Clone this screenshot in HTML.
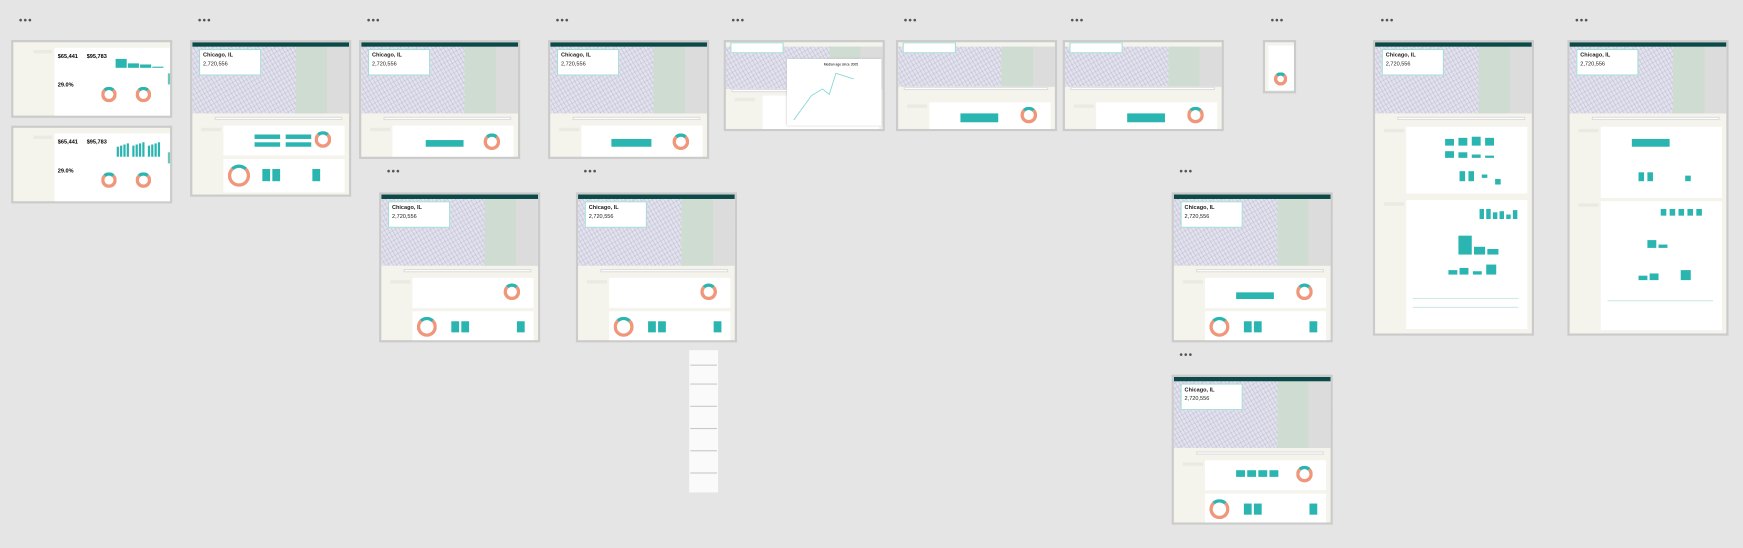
<!DOCTYPE html>
<html><head><meta charset="utf-8"><style>
*{margin:0;padding:0;box-sizing:border-box}
body{width:1743px;height:548px;background:#e5e5e5;overflow:hidden;font-family:"Liberation Sans",sans-serif}
#c{position:absolute;left:0;top:0;width:1568px;height:493px;transform:scale(1.11161);transform-origin:0 0}
.f{position:absolute;background:#f4f3ec;border:2px solid #cbcbcb;overflow:hidden}
.dots{position:absolute;font-size:9px;color:#555;letter-spacing:1px;line-height:6px}
.hd{position:absolute;left:0;top:0;right:0;height:3.5px;background:#0b4a48}
.mp{position:absolute;left:0;top:3.5px;right:0;background:
 linear-gradient(90deg,rgba(0,0,0,0) 66%,#cfdcd2 66%,#cfdcd2 86%,#dcdcdc 86%),
 repeating-linear-gradient(60deg,rgba(150,150,210,.25) 0 1px,transparent 1px 3px),
 repeating-linear-gradient(-30deg,rgba(150,150,210,.2) 0 1px,transparent 1px 4px),#e4e3ea}
.ic{position:absolute;left:4%;top:6px;width:40%;height:24px;background:#fff;border:1px solid #a9dcd8}
.ic b{position:absolute;left:3px;top:2px;font-size:5px;color:#222}
.ic i{position:absolute;left:3px;top:10px;font-size:5px;font-style:normal;color:#222}
.card{position:absolute;background:#fff}
.side{position:absolute;background:#ebeae2}
.bar{position:absolute;background:#2bb5b0}
.dn{position:absolute;border-radius:50%;border:3px solid #f0967a;border-top-color:#2bb5b0}
.ln{position:absolute;height:1px;background:#c9c9c9}
.srch{position:absolute;height:3px;background:#fff;border:0.5px solid #ddd}
.tab{position:absolute;width:3px;background:#6cc5b8}
</style></head><body><div id="c">

<div class="dots" style="left:17px;top:15px">•••</div>
<div class="dots" style="left:17px;top:93px">•••</div>
<div class="dots" style="left:178px;top:15px">•••</div>
<div class="dots" style="left:330px;top:15px">•••</div>
<div class="dots" style="left:500px;top:15px">•••</div>
<div class="dots" style="left:658px;top:15px">•••</div>
<div class="dots" style="left:813px;top:15px">•••</div>
<div class="dots" style="left:963px;top:15px">•••</div>
<div class="dots" style="left:1143px;top:15px">•••</div>
<div class="dots" style="left:1242px;top:15px">•••</div>
<div class="dots" style="left:1417px;top:15px">•••</div>
<div class="dots" style="left:348px;top:151px">•••</div>
<div class="dots" style="left:525px;top:151px">•••</div>
<div class="dots" style="left:1061px;top:151px">•••</div>
<div class="dots" style="left:1061px;top:316px">•••</div>

<div class="f" style="left:10px;top:36px;width:145px;height:70px">
 <div class="side" style="left:18px;top:7px;width:17px;height:3px"></div>
 <div class="card" style="left:37px;top:5px;width:104px;height:62px"></div>
 <div style="position:absolute;left:40px;top:10px;font-size:5px;font-weight:bold">$65,441</div>
 <div style="position:absolute;left:66px;top:10px;font-size:5px;font-weight:bold">$95,783</div>
 <div class="bar" style="left:92px;top:15px;width:10px;height:8px"></div>
 <div class="bar" style="left:103px;top:19px;width:10px;height:4px"></div>
 <div class="bar" style="left:114px;top:20px;width:10px;height:3px"></div>
 <div class="bar" style="left:125px;top:22px;width:10px;height:1px"></div>
 <div style="position:absolute;left:40px;top:36px;font-size:5px;font-weight:bold">29.0%</div>
 <div class="dn" style="left:79px;top:40px;width:14px;height:14px"></div>
 <div class="dn" style="left:110px;top:40px;width:14px;height:14px"></div>
 <div class="tab" style="left:139px;top:28px;height:10px"></div>
</div>
<div class="f" style="left:10px;top:113px;width:145px;height:70px">
 <div class="side" style="left:18px;top:7px;width:17px;height:3px"></div>
 <div class="card" style="left:37px;top:5px;width:104px;height:62px"></div>
 <div style="position:absolute;left:40px;top:10px;font-size:5px;font-weight:bold">$65,441</div>
 <div style="position:absolute;left:66px;top:10px;font-size:5px;font-weight:bold">$95,783</div>
 <div class="bar" style="left:93px;top:17px;width:2px;height:9px"></div><div class="bar" style="left:96px;top:16px;width:2px;height:10px"></div><div class="bar" style="left:99px;top:15px;width:2px;height:11px"></div><div class="bar" style="left:102px;top:14px;width:2px;height:12px"></div>
 <div class="bar" style="left:107px;top:16px;width:2px;height:10px"></div><div class="bar" style="left:110px;top:15px;width:2px;height:11px"></div><div class="bar" style="left:113px;top:14px;width:2px;height:12px"></div><div class="bar" style="left:116px;top:13px;width:2px;height:13px"></div>
 <div class="bar" style="left:121px;top:16px;width:2px;height:10px"></div><div class="bar" style="left:124px;top:15px;width:2px;height:11px"></div><div class="bar" style="left:127px;top:14px;width:2px;height:12px"></div><div class="bar" style="left:130px;top:13px;width:2px;height:13px"></div>
 <div style="position:absolute;left:40px;top:36px;font-size:5px;font-weight:bold">29.0%</div>
 <div class="dn" style="left:79px;top:40px;width:14px;height:14px"></div>
 <div class="dn" style="left:110px;top:40px;width:14px;height:14px"></div>
 <div class="tab" style="left:139px;top:22px;height:10px"></div>
</div>

<div class="f" style="left:171px;top:36px;width:145px;height:141px">
 <div class="mp" style="height:60px"></div><div class="hd"></div>
 <div class="ic"><b>Chicago, IL</b><i>2,720,556</i></div>
 <div class="srch" style="left:20px;top:67px;width:115px"></div>
 <div class="side" style="left:8px;top:77px;width:18px;height:3px"></div>
 <div class="card" style="left:28px;top:75px;width:109px;height:27px"></div>
 <div class="bar" style="left:56px;top:83px;width:23px;height:4px"></div><div class="bar" style="left:56px;top:90px;width:23px;height:4px"></div>
 <div class="bar" style="left:84px;top:83px;width:23px;height:4px"></div><div class="bar" style="left:84px;top:90px;width:23px;height:4px"></div>
 <div class="dn" style="left:110px;top:80px;width:15px;height:15px"></div>
 <div class="card" style="left:28px;top:105px;width:109px;height:30px"></div>
 <div class="dn" style="left:32px;top:110px;width:20px;height:20px"></div>
 <div class="bar" style="left:63px;top:114px;width:7px;height:11px"></div><div class="bar" style="left:72px;top:114px;width:7px;height:11px"></div>
 <div class="bar" style="left:108px;top:114px;width:7px;height:11px"></div>
 <div class="tab" style="left:141px;top:36px;height:10px"></div>
</div>
<div class="f" style="left:323px;top:36px;width:145px;height:107px">
 <div class="mp" style="height:60px"></div><div class="hd"></div>
 <div class="ic"><b>Chicago, IL</b><i>2,720,556</i></div>
 <div class="srch" style="left:20px;top:67px;width:115px"></div>
 <div class="side" style="left:8px;top:77px;width:18px;height:3px"></div>
 <div class="card" style="left:28px;top:75px;width:109px;height:28px"></div>
 <div class="bar" style="left:58px;top:88px;width:34px;height:6px"></div>
 <div class="dn" style="left:110px;top:82px;width:15px;height:15px"></div>
</div>
<div class="f" style="left:493px;top:36px;width:145px;height:107px">
 <div class="mp" style="height:60px"></div><div class="hd"></div>
 <div class="ic"><b>Chicago, IL</b><i>2,720,556</i></div>
 <div class="srch" style="left:20px;top:67px;width:115px"></div>
 <div class="side" style="left:8px;top:77px;width:18px;height:3px"></div>
 <div class="card" style="left:28px;top:75px;width:109px;height:28px"></div>
 <div class="bar" style="left:55px;top:87px;width:36px;height:7px"></div>
 <div class="dn" style="left:110px;top:82px;width:15px;height:15px"></div>
</div>
<div class="f" style="left:651px;top:36px;width:145px;height:82px">
 <div class="mp" style="height:38px"></div>
 <div class="card" style="left:4px;top:0;width:48px;height:10px;border:1px solid #a9dcd8"></div>
 <div class="srch" style="left:5px;top:42px;width:130px"></div>
 <div class="side" style="left:8px;top:50px;width:18px;height:3px"></div>
 <div class="card" style="left:33px;top:48px;width:105px;height:32px"></div>
 <div class="card" style="left:55px;top:15px;width:85px;height:60px;box-shadow:0 0 2px #bbb"></div>
 <svg style="position:absolute;left:55px;top:15px" width="85" height="60"><text x="33" y="6" font-size="3" font-family="Liberation Sans">Median age since 2005</text><polyline points="6,55 22,33 32,27 38,32 44,13 60,18" fill="none" stroke="#8ad8d8" stroke-width="0.8"/></svg>
</div>
<div class="f" style="left:806px;top:36px;width:145px;height:82px">
 <div class="mp" style="height:36px"></div>
 <div class="card" style="left:4px;top:0;width:48px;height:10px;border:1px solid #a9dcd8"></div>
 <div class="srch" style="left:5px;top:40px;width:130px"></div>
 <div class="side" style="left:8px;top:56px;width:18px;height:3px"></div>
 <div class="card" style="left:28px;top:54px;width:109px;height:26px"></div>
 <div class="bar" style="left:56px;top:64px;width:34px;height:8px"></div>
 <div class="dn" style="left:110px;top:58px;width:15px;height:15px"></div>
</div>
<div class="f" style="left:956px;top:36px;width:145px;height:82px">
 <div class="mp" style="height:36px"></div>
 <div class="card" style="left:4px;top:0;width:48px;height:10px;border:1px solid #a9dcd8"></div>
 <div class="srch" style="left:5px;top:40px;width:130px"></div>
 <div class="side" style="left:8px;top:56px;width:18px;height:3px"></div>
 <div class="card" style="left:28px;top:54px;width:109px;height:26px"></div>
 <div class="bar" style="left:56px;top:64px;width:34px;height:8px"></div>
 <div class="dn" style="left:110px;top:58px;width:15px;height:15px"></div>
</div>
<div class="f" style="left:1136px;top:36px;width:30px;height:48px">
 <div class="card" style="left:3px;top:3px;width:23px;height:40px"></div>
 <div class="dn" style="left:8px;top:27px;width:12px;height:12px"></div>
</div>
<div class="f" style="left:1235px;top:36px;width:145px;height:266px">
 <div class="mp" style="height:60px"></div><div class="hd"></div>
 <div class="ic"><b>Chicago, IL</b><i>2,720,556</i></div>
 <div class="srch" style="left:20px;top:67px;width:115px"></div>
 <div class="side" style="left:8px;top:78px;width:18px;height:3px"></div>
 <div class="card" style="left:28px;top:76px;width:109px;height:60px"></div>
 <div class="bar" style="left:63px;top:87px;width:8px;height:6px"></div><div class="bar" style="left:75px;top:86px;width:8px;height:7px"></div><div class="bar" style="left:87px;top:85px;width:8px;height:8px"></div><div class="bar" style="left:99px;top:86px;width:8px;height:7px"></div>
 <div class="bar" style="left:63px;top:98px;width:8px;height:6px"></div><div class="bar" style="left:75px;top:99px;width:8px;height:5px"></div><div class="bar" style="left:87px;top:101px;width:8px;height:3px"></div><div class="bar" style="left:99px;top:102px;width:8px;height:2px"></div>
 <div class="bar" style="left:76px;top:116px;width:5px;height:9px"></div><div class="bar" style="left:84px;top:116px;width:5px;height:9px"></div><div class="bar" style="left:96px;top:119px;width:5px;height:3px"></div><div class="bar" style="left:108px;top:123px;width:5px;height:5px"></div>
 <div class="side" style="left:8px;top:144px;width:18px;height:3px"></div>
 <div class="card" style="left:28px;top:142px;width:109px;height:116px"></div>
 <div class="bar" style="left:94px;top:150px;width:4px;height:9px"></div><div class="bar" style="left:100px;top:150px;width:4px;height:9px"></div><div class="bar" style="left:106px;top:153px;width:4px;height:6px"></div><div class="bar" style="left:112px;top:152px;width:4px;height:7px"></div><div class="bar" style="left:118px;top:155px;width:4px;height:4px"></div><div class="bar" style="left:124px;top:151px;width:4px;height:8px"></div>
 <div class="bar" style="left:75px;top:174px;width:12px;height:17px"></div><div class="bar" style="left:89px;top:184px;width:10px;height:7px"></div><div class="bar" style="left:101px;top:186px;width:10px;height:5px"></div>
 <div class="bar" style="left:66px;top:205px;width:8px;height:4px"></div><div class="bar" style="left:76px;top:203px;width:8px;height:6px"></div><div class="bar" style="left:88px;top:206px;width:8px;height:3px"></div><div class="bar" style="left:100px;top:200px;width:9px;height:9px"></div>
 <div class="ln" style="left:34px;top:230px;width:95px;background:#cfe9e8"></div>
 <div class="ln" style="left:34px;top:238px;width:95px;background:#cfe9e8"></div>
</div>
<div class="f" style="left:1410px;top:36px;width:145px;height:266px">
 <div class="mp" style="height:60px"></div><div class="hd"></div>
 <div class="ic"><b>Chicago, IL</b><i>2,720,556</i></div>
 <div class="srch" style="left:20px;top:67px;width:115px"></div>
 <div class="side" style="left:8px;top:78px;width:18px;height:3px"></div>
 <div class="card" style="left:28px;top:76px;width:109px;height:64px"></div>
 <div class="bar" style="left:56px;top:87px;width:34px;height:7px"></div>
 <div class="bar" style="left:62px;top:117px;width:5px;height:8px"></div><div class="bar" style="left:70px;top:117px;width:5px;height:8px"></div><div class="bar" style="left:104px;top:120px;width:5px;height:5px"></div>
 <div class="side" style="left:8px;top:145px;width:18px;height:3px"></div>
 <div class="card" style="left:28px;top:143px;width:109px;height:116px"></div>
 <div class="bar" style="left:82px;top:150px;width:5px;height:6px"></div><div class="bar" style="left:90px;top:150px;width:5px;height:6px"></div><div class="bar" style="left:98px;top:150px;width:5px;height:6px"></div><div class="bar" style="left:106px;top:150px;width:5px;height:6px"></div><div class="bar" style="left:114px;top:150px;width:5px;height:6px"></div>
 <div class="bar" style="left:70px;top:178px;width:8px;height:7px"></div><div class="bar" style="left:80px;top:182px;width:8px;height:3px"></div>
 <div class="bar" style="left:62px;top:210px;width:8px;height:4px"></div><div class="bar" style="left:72px;top:208px;width:8px;height:6px"></div><div class="bar" style="left:100px;top:205px;width:9px;height:9px"></div>
 <div class="ln" style="left:34px;top:232px;width:95px;background:#cfe9e8"></div>
</div>
<div class="f" style="left:341px;top:173px;width:145px;height:135px">
 <div class="mp" style="height:60px"></div><div class="hd"></div>
 <div class="ic"><b>Chicago, IL</b><i>2,720,556</i></div>
 <div class="srch" style="left:20px;top:67px;width:115px"></div>
 <div class="side" style="left:8px;top:77px;width:18px;height:3px"></div>
 <div class="card" style="left:28px;top:75px;width:109px;height:27px"></div>
 <div class="dn" style="left:110px;top:80px;width:15px;height:15px"></div>
 <div class="card" style="left:28px;top:105px;width:109px;height:28px"></div>
 <div class="dn" style="left:32px;top:110px;width:18px;height:18px"></div>
 <div class="bar" style="left:63px;top:114px;width:7px;height:10px"></div><div class="bar" style="left:72px;top:114px;width:7px;height:10px"></div><div class="bar" style="left:122px;top:114px;width:7px;height:10px"></div>
</div>
<div class="f" style="left:518px;top:173px;width:145px;height:135px">
 <div class="mp" style="height:60px"></div><div class="hd"></div>
 <div class="ic"><b>Chicago, IL</b><i>2,720,556</i></div>
 <div class="srch" style="left:20px;top:67px;width:115px"></div>
 <div class="side" style="left:8px;top:77px;width:18px;height:3px"></div>
 <div class="card" style="left:28px;top:75px;width:109px;height:27px"></div>
 <div class="dn" style="left:110px;top:80px;width:15px;height:15px"></div>
 <div class="card" style="left:28px;top:105px;width:109px;height:28px"></div>
 <div class="dn" style="left:32px;top:110px;width:18px;height:18px"></div>
 <div class="bar" style="left:63px;top:114px;width:7px;height:10px"></div><div class="bar" style="left:72px;top:114px;width:7px;height:10px"></div><div class="bar" style="left:122px;top:114px;width:7px;height:10px"></div>
</div>
<div class="f" style="left:1054px;top:173px;width:145px;height:135px">
 <div class="mp" style="height:60px"></div><div class="hd"></div>
 <div class="ic"><b>Chicago, IL</b><i>2,720,556</i></div>
 <div class="srch" style="left:20px;top:67px;width:115px"></div>
 <div class="side" style="left:8px;top:77px;width:18px;height:3px"></div>
 <div class="card" style="left:28px;top:75px;width:109px;height:27px"></div>
 <div class="bar" style="left:56px;top:88px;width:34px;height:6px"></div>
 <div class="dn" style="left:110px;top:80px;width:15px;height:15px"></div>
 <div class="card" style="left:28px;top:105px;width:109px;height:28px"></div>
 <div class="dn" style="left:32px;top:110px;width:18px;height:18px"></div>
 <div class="bar" style="left:63px;top:114px;width:7px;height:10px"></div><div class="bar" style="left:72px;top:114px;width:7px;height:10px"></div><div class="bar" style="left:122px;top:114px;width:7px;height:10px"></div>
</div>
<div class="f" style="left:1054px;top:337px;width:145px;height:135px">
 <div class="mp" style="height:60px"></div><div class="hd"></div>
 <div class="ic"><b>Chicago, IL</b><i>2,720,556</i></div>
 <div class="srch" style="left:20px;top:67px;width:115px"></div>
 <div class="side" style="left:8px;top:77px;width:18px;height:3px"></div>
 <div class="card" style="left:28px;top:75px;width:109px;height:27px"></div>
 <div class="bar" style="left:56px;top:84px;width:8px;height:6px"></div><div class="bar" style="left:66px;top:84px;width:8px;height:6px"></div><div class="bar" style="left:76px;top:84px;width:8px;height:6px"></div><div class="bar" style="left:86px;top:84px;width:8px;height:6px"></div>
 <div class="dn" style="left:110px;top:80px;width:15px;height:15px"></div>
 <div class="card" style="left:28px;top:105px;width:109px;height:28px"></div>
 <div class="dn" style="left:32px;top:110px;width:18px;height:18px"></div>
 <div class="bar" style="left:63px;top:114px;width:7px;height:10px"></div><div class="bar" style="left:72px;top:114px;width:7px;height:10px"></div><div class="bar" style="left:122px;top:114px;width:7px;height:10px"></div>
</div>
<div class="card" style="left:620px;top:315px;width:26px;height:128px;background:#fafafa"></div>
<div class="ln" style="left:621px;top:328px;width:24px"></div><div class="ln" style="left:621px;top:345px;width:24px"></div><div class="ln" style="left:621px;top:365px;width:24px"></div><div class="ln" style="left:621px;top:385px;width:24px"></div><div class="ln" style="left:621px;top:405px;width:24px"></div><div class="ln" style="left:621px;top:425px;width:24px"></div>
</div></body></html>
